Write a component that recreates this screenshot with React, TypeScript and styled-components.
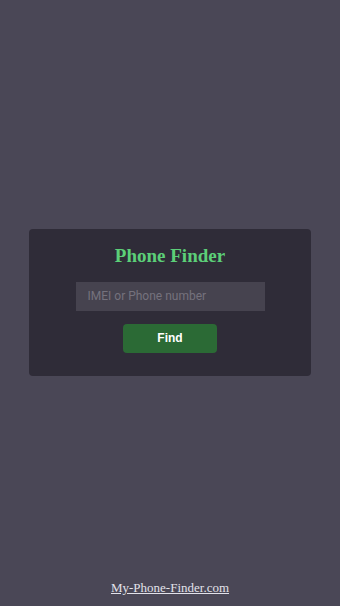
import React from 'react';
import styled, { createGlobalStyle } from 'styled-components';

const Global = createGlobalStyle`
    html, body {
        margin:0;
        padding:0;
        background:#4a4756;
    }
    * { box-sizing:border-box; }
`;

const Page = styled.div`
    display:flex;
    flex-direction:column;
    min-height:100vh;
`;

const Main = styled.main`
    flex:1;
    display:flex;
    align-items:center;
    justify-content:center;
    padding:26px 29px 0;
`;

const Card = styled.div`
    width:100%;
    height:147px;
    background:#2f2c38;
    border-radius:4px;
    padding:16px 0 0;
    display:flex;
    flex-direction:column;
    align-items:center;
`;

const Title = styled.h1`
    margin:0;
    font-family:"Liberation Serif", "DejaVu Serif", serif;
    font-weight:700;
    font-size:19px;
    line-height:22px;
    color:#5ccf78;
`;

const Input = styled.input`
    margin-top:15px;
    width:189px;
    height:29px;
    border:0;
    outline:none;
    background:#46434f;
    padding:0 12px;
    font-family:"Roboto", "Liberation Sans", sans-serif;
    font-size:12px;
    color:#ddd;
    &::placeholder { color:#75727d; }
`;

const Button = styled.button`
    margin-top:13px;
    width:94px;
    height:29px;
    border:0;
    border-radius:4px;
    background:#2b6a35;
    color:#fff;
    font-family:"Liberation Sans", sans-serif;
    font-weight:700;
    font-size:12px;
`;

const Footer = styled.footer`
    text-align:center;
    padding-bottom:10px;
`;

const Link = styled.a`
    font-family:"Liberation Serif", serif;
    font-size:13px;
    color:#e2e2ea;
    text-decoration:underline;
`;

const App = () => {
    return (
        <Page>
            <Global />
            <Main>
                <Card>
                    <Title>Phone Finder</Title>
                    <Input placeholder="IMEI or Phone number" />
                    <Button>Find</Button>
                </Card>
            </Main>
            <Footer><Link href="#">My-Phone-Finder.com</Link></Footer>
        </Page>
    )
}

export default App;
